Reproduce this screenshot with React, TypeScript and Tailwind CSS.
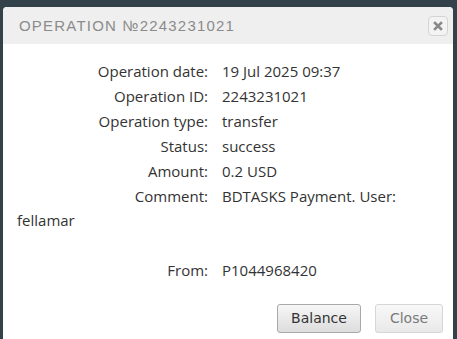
import React from "react";

const ROWS: { label: string; value: string }[] = [
  { label: "Operation date:", value: "19 Jul 2025 09:37" },
  { label: "Operation ID:", value: "2243231021" },
  { label: "Operation type:", value: "transfer" },
  { label: "Status:", value: "success" },
  { label: "Amount:", value: "0.2 USD" },
  { label: "Comment:", value: "BDTASKS Payment. User:" },
];

function CloseIcon() {
  return (
    <svg width="10" height="10" viewBox="0 0 10 10" aria-hidden>
      <path d="M2 2 L8 8 M8 2 L2 8" stroke="#8a8a8a" strokeWidth="2.6" strokeLinecap="square" />
    </svg>
  );
}

function Row({ label, value }: { label: string; value: string }) {
  return (
    <div className="flex gap-[14px]">
      <span className="w-[191px] shrink-0 text-right">{label}</span>
      <span>{value}</span>
    </div>
  );
}

export default function App() {
  return (
    <div className="h-[339px] w-[457px] overflow-hidden bg-[#33414a] pt-[7px] pl-[3px]">
      <div className="h-[360px] w-[450px] rounded-t-[4px] bg-white">
        {/* header */}
        <div className="flex h-[37px] items-center justify-between rounded-t-[4px] bg-[#efefef] pl-4 pr-[5px]">
          <span
            className="pt-[1px] text-[15px] uppercase tracking-[1.2px] text-[#8b8b8b]"
            style={{ fontFamily: '"Liberation Sans", Arial, sans-serif' }}
          >
            Operation №2243231021
          </span>
          <button
            type="button"
            className="flex h-[20px] w-[20px] items-center justify-center rounded-[4px] border border-[#d4d4d4] bg-[#f3f3f3]"
            aria-label="Close"
          >
            <CloseIcon />
          </button>
        </div>

        {/* body */}
        <div
          className="pl-[14px] pr-4 pt-[15px] text-[15px] leading-[24.9px] text-[#333]"
          style={{ fontFamily: '"Open Sans", sans-serif' }}
        >
          {ROWS.map((r) => (
            <Row key={r.label} label={r.label} value={r.value} />
          ))}
          {/* wrapped tail of the comment */}
          <div>fellamar</div>
          <div className="h-[24.9px]" />
          <Row label="From:" value="P1044968420" />
        </div>

        {/* footer */}
        <div
          className="mt-[21px] flex justify-end gap-[14px] pr-[10px] text-[14px]"
          style={{ fontFamily: '"DejaVu Sans", Verdana, sans-serif' }}
        >
          <button
            type="button"
            className="h-[29px] w-[84px] rounded-[3px] border border-[#a9a9a9] bg-gradient-to-b from-[#f6f6f6] to-[#dddddd] text-[#333]"
          >
            Balance
          </button>
          <button
            type="button"
            className="h-[29px] w-[68px] rounded-[3px] border border-[#d6d6d6] bg-gradient-to-b from-[#f8f8f8] to-[#e9e9e9] text-[#7a7a7a]"
          >
            Close
          </button>
        </div>
      </div>
    </div>
  );
}
